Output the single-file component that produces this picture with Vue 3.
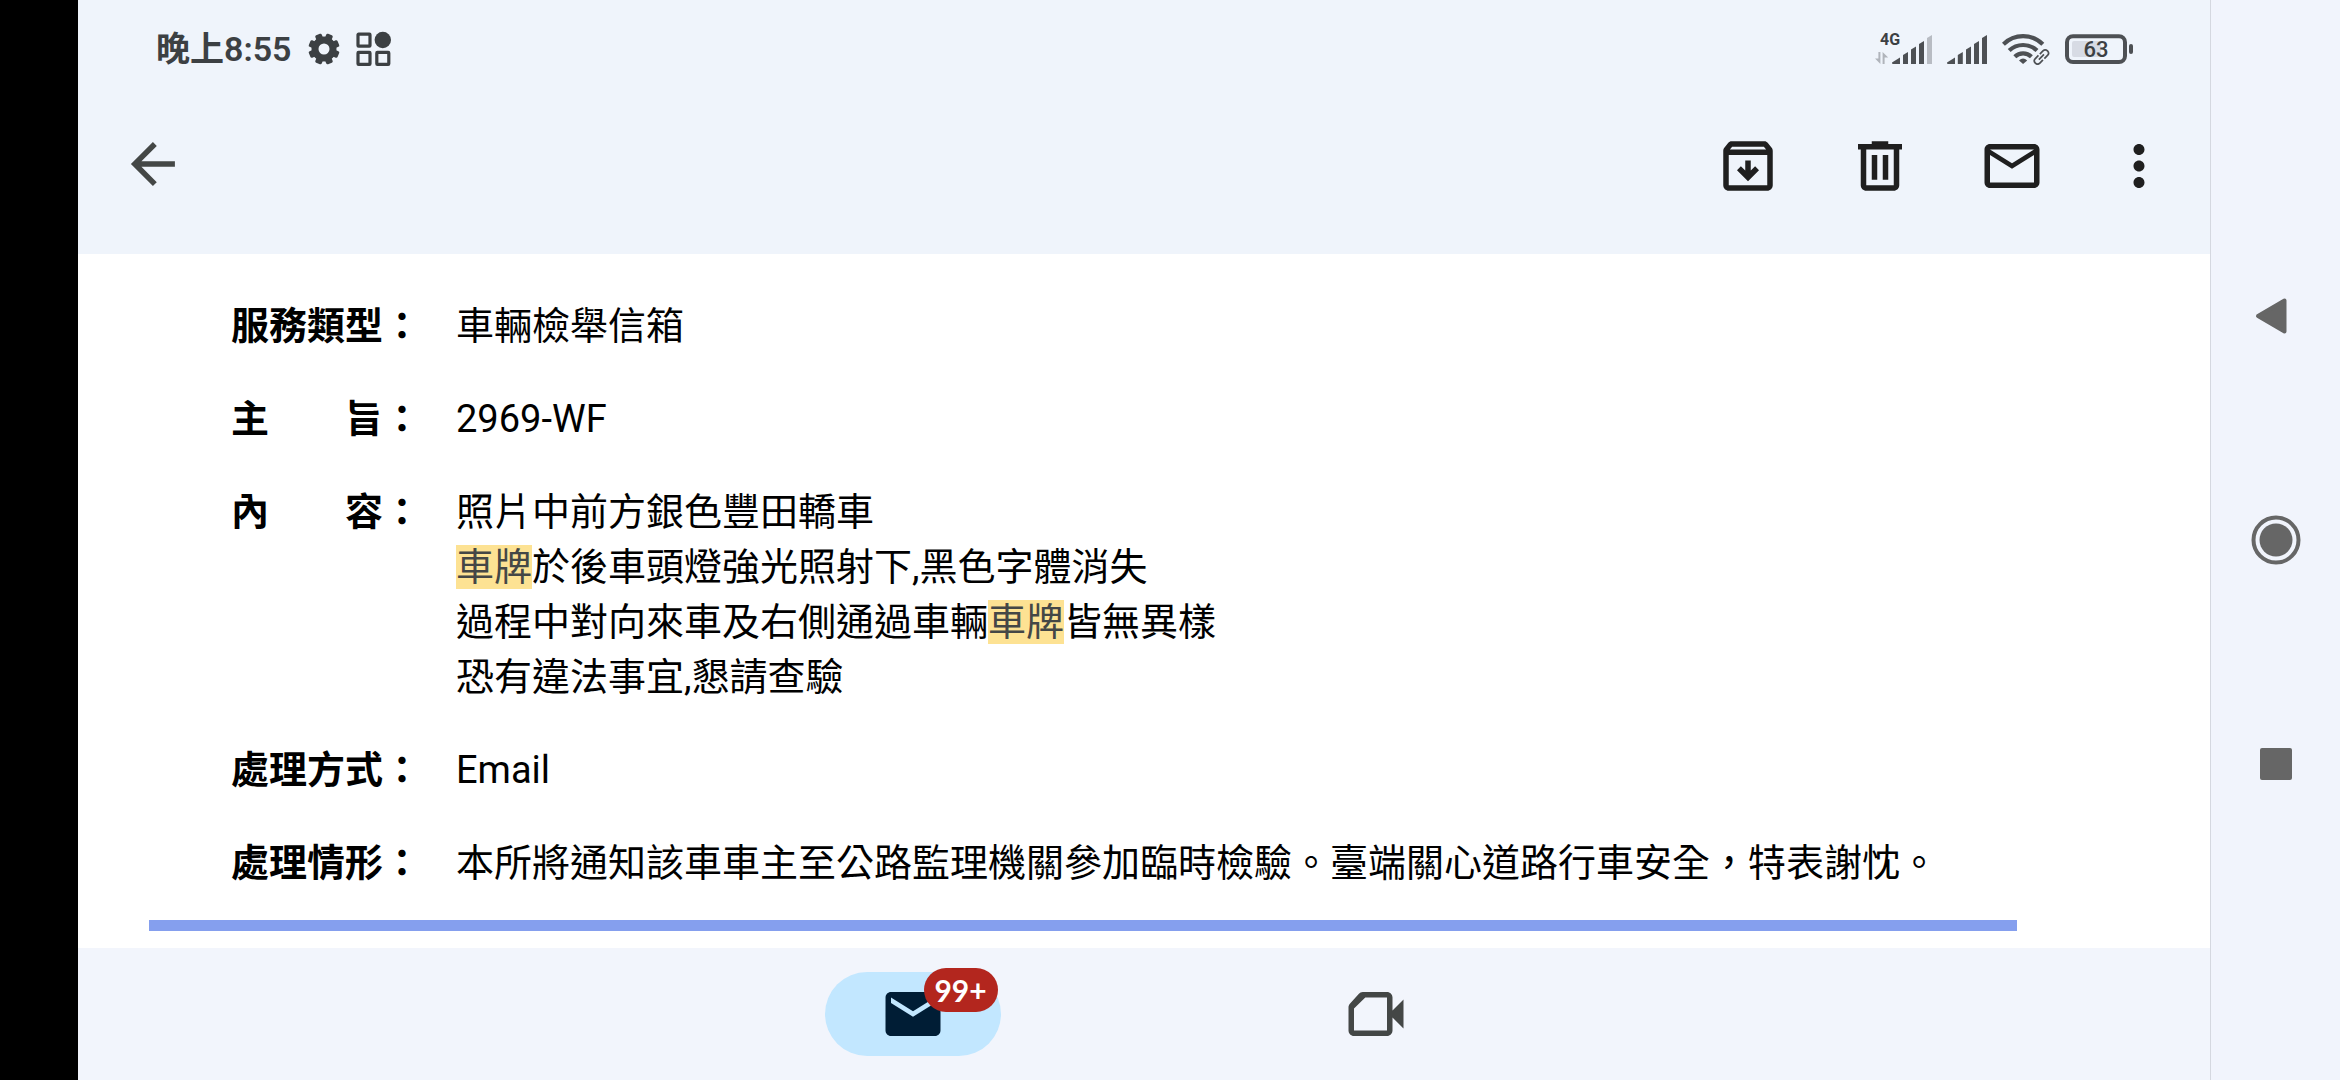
<template>
  <div class="screen">
    <div class="cutout"></div>

    <div class="app">
      <header class="header">
        <div class="status-bar">
          <div class="status-left">
            <span class="clock">晚上8:55</span>
            <svg class="gear" width="32" height="32" viewBox="-16 -16 32 32" aria-hidden="true">
              <circle r="9" fill="none" stroke="#3c4043" stroke-width="7" />
              <rect
                v-for="angle in gearTeeth"
                :key="angle"
                x="-3.5"
                y="-15.6"
                width="7"
                height="6"
                rx="1.5"
                fill="#3c4043"
                :transform="`rotate(${angle})`"
              />
            </svg>
            <svg width="36" height="36" viewBox="0 0 36 36" aria-hidden="true">
              <g fill="none" stroke="#3c4043" stroke-width="3.2">
                <rect x="2" y="3.2" width="12" height="12" rx="0.6" />
                <rect x="2" y="21.4" width="12" height="12" rx="0.6" />
                <rect x="20.8" y="21.4" width="12" height="12" rx="0.6" />
              </g>
              <circle cx="26.8" cy="9" r="8.2" fill="#3c4043" />
            </svg>
          </div>

          <div class="status-right">
            <svg width="58" height="48" viewBox="0 -8 58 48" role="img" aria-label="4G">
              <text class="network" x="5" y="12">4G</text>
              <g fill="#b0b4bb">
                <path d="M3.4 19h2v12L0 25.6h3.4z" />
                <path d="M7.6 31V19l5.6 5.4H9.6V31z" />
              </g>
              <g fill="#4d5054">
                <path d="M17 29.4l8-4.8V31h-7.6z" />
                <path d="M28 22l5-3v12h-5z" />
                <path d="M36 16.4l5-3V31h-5z" />
                <path d="M44 11l5-3v23h-5z" />
              </g>
              <path d="M52 5l5-3v29h-5z" fill="#b8bcc3" />
            </svg>
            <svg class="signal" width="41" height="32" viewBox="0 0 41 32" aria-hidden="true">
              <g fill="#4d5054">
                <path d="M0 29.4l8-4.8V31H.4z" />
                <path d="M10.8 22l5-3v12h-5z" />
                <path d="M19 16.4l5-3V31h-5z" />
                <path d="M27 11l5-3v23h-5z" />
                <path d="M35 5l5-3v29h-5z" />
              </g>
            </svg>
            <svg class="wifi" width="48" height="32" viewBox="0 0 48 32" aria-hidden="true">
              <g fill="none" stroke="#4d5054" stroke-width="4.2">
                <path d="M1.4 11.2a28 28 0 0 1 39.4 0" />
                <path d="M7.2 17.6a20 20 0 0 1 27.8 0" />
                <path d="M12.8 23.8a12 12 0 0 1 16.6 0" />
              </g>
              <path d="M17 27.4q4-3.6 8.200 0L21.100 31z" fill="#4d5054" />
              <g transform="translate(39.4 24) rotate(-45)" fill="none">
                <path d="M-2-3.4h-3.6a3.4 3.4 0 0 0 0 6.8H-2M2-3.4h3.6a3.4 3.4 0 0 1 0 6.8H2M-3.6 0h7.2" stroke="#eff4fb" stroke-width="4.6" />
                <path d="M-1-3.2h-4.4a3.2 3.2 0 0 0 0 6.4H-1M1-3.2h4.4a3.2 3.2 0 0 1 0 6.4H1M-3.6 0h7.2" stroke="#4d5054" stroke-width="1.7" />
              </g>
            </svg>
            <svg class="battery" width="70" height="32" viewBox="0 0 70 32" role="img" aria-label="63">
              <rect x="3" y="3.2" width="58" height="25.8" rx="6" fill="none" stroke="#4d5054" stroke-width="4" />
              <rect x="8" y="8" width="29" height="16" rx="2" fill="#d7dbe4" />
              <rect x="65" y="11" width="4" height="10" rx="2" fill="#4d5054" />
              <text class="level" x="32" y="24" text-anchor="middle">63</text>
            </svg>
          </div>
        </div>

        <div class="toolbar">
          <button class="icon-btn back" type="button" aria-label="返回">
            <svg width="66" height="66" viewBox="0.4 0.7 24 24">
              <path fill="#444746" d="M20 11H7.83l5.59-5.59L12 4l-8 8 8 8 1.41-1.41L7.83 13H20v-2z" />
            </svg>
          </button>
          <div class="actions">
            <button
              v-for="action in actions"
              :key="action.name"
              class="icon-btn"
              :class="action.name"
              type="button"
              :aria-label="action.label"
            >
              <svg width="66" height="66" viewBox="0 0 24 24">
                <path fill="#1f1f1f" fill-rule="evenodd" :d="action.path" />
              </svg>
            </button>
          </div>
        </div>
      </header>

      <main class="content">
        <div class="message">
          <table class="details">
            <tbody>
              <tr v-for="row in rows" :key="row.label">
                <th scope="row">{{ row.label }}</th>
                <td>
                  <div v-for="(line, i) in row.lines" :key="i">
                    <template v-for="(part, j) in splitKeyword(line)" :key="j">
                      <mark v-if="part === keyword">{{ part }}</mark>
                      <template v-else>{{ part }}</template>
                    </template>
                  </div>
                </td>
              </tr>
            </tbody>
          </table>
        </div>
      </main>

      <nav class="tabs">
        <button class="tab active" type="button" aria-label="郵件">
          <svg width="66" height="66" viewBox="0 0 24 24">
            <path fill="#001d35" d="M20 4H4c-1.1 0-1.99.9-1.99 2L2 18c0 1.1.9 2 2 2h16c1.1 0 2-.9 2-2V6c0-1.1-.9-2-2-2zm0 4l-8 5-8-5V6l8 5 8-5v2z" />
          </svg>
          <span class="badge">99+</span>
        </button>
        <button class="tab" type="button" aria-label="會議">
          <svg width="66" height="66" viewBox="0 0 24 24">
            <path fill="#444746" fill-rule="evenodd" d="M7.2 4H16c1.1 0 2 .9 2 2v4.7l4-4v10.6l-4-4V18c0 1.1-.9 2-2 2H4c-1.1 0-2-.9-2-2V9.6c0-.5.2-.9.5-1.3l3.2-3.6c.4-.4.9-.7 1.5-.7zM8.1 6L4 10v8h12V6z" />
          </svg>
        </button>
      </nav>
    </div>

    <aside class="system-nav">
      <button type="button" aria-label="上一頁">
        <svg width="56" height="56" viewBox="0 0 56 56">
          <path d="M10 28L36.5 12.5V43.5z" fill="#666" stroke="#666" stroke-width="4" stroke-linejoin="round" />
        </svg>
      </button>
      <button type="button" aria-label="主畫面">
        <svg width="56" height="56" viewBox="0 0 56 56">
          <circle cx="28" cy="28" r="22.5" fill="none" stroke="#666" stroke-width="4" />
          <circle cx="28" cy="28" r="16.5" fill="#666" />
        </svg>
      </button>
      <button type="button" aria-label="最近使用">
        <svg width="56" height="56" viewBox="0 0 56 56">
          <rect x="12" y="12" width="32" height="32" rx="2" fill="#666" />
        </svg>
      </button>
    </aside>
  </div>
</template>

<script setup>
const keyword = "車牌";

const gearTeeth = [22.5, 67.5, 112.5, 157.5, 202.5, 247.5, 292.5, 337.5];

const actions = [
  {
    name: "archive",
    label: "封存",
    path: "M20.54 5.23l-1.39-1.68C18.88 3.21 18.47 3 18 3H6c-.47 0-.88.21-1.16.55L3.46 5.23C3.17 5.57 3 6.02 3 6.5V19c0 1.1.9 2 2 2h14c1.1 0 2-.9 2-2V6.5c0-.48-.17-.93-.46-1.27zM6.24 5h11.52l.83 1H5.42l.82-1zM5 19V8h14v11H5zm11-5.5l-4 4-4-4 1.41-1.41L11 13.67V10h2v3.67l1.59-1.58L16 13.5z",
  },
  {
    name: "delete",
    label: "刪除",
    path: "M15 4V3H9v1H4v2h1v13c0 1.1.9 2 2 2h10c1.1 0 2-.9 2-2V6h1V4h-5zm2 15H7V6h10v13zM9 8h2v9H9zM13 8h2v9h-2z",
  },
  {
    name: "unread",
    label: "標示為未讀",
    path: "M22 6c0-1.1-.9-2-2-2H4c-1.1 0-2 .9-2 2v12c0 1.1.9 2 2 2h16c1.1 0 2-.9 2-2V6zm-2 0l-8 5-8-5h16zm0 12H4V8l8 5 8-5v10z",
  },
  {
    name: "more",
    label: "更多選項",
    path: "M12 8c1.1 0 2-.9 2-2s-.9-2-2-2-2 .9-2 2 .9 2 2 2zm0 2c-1.1 0-2 .9-2 2s.9 2 2 2 2-.9 2-2-.9-2-2-2zm0 6c-1.1 0-2 .9-2 2s.9 2 2 2 2-.9 2-2-.9-2-2-2z",
  },
];

const rows = [
  { label: "服務類型：", lines: ["車輛檢舉信箱"] },
  { label: "主　　旨：", lines: ["2969-WF"] },
  {
    label: "內　　容：",
    lines: [
      "照片中前方銀色豐田轎車",
      "車牌於後車頭燈強光照射下,黑色字體消失",
      "過程中對向來車及右側通過車輛車牌皆無異樣",
      "恐有違法事宜,懇請查驗",
    ],
  },
  { label: "處理方式：", lines: ["Email"] },
  {
    label: "處理情形：",
    lines: ["本所將通知該車車主至公路監理機關參加臨時檢驗。臺端關心道路行車安全，特表謝忱。"],
  },
];

// Cut a line around the search keyword so it can be highlighted
const splitKeyword = (line) => line.split(new RegExp(`(${keyword})`)).filter(Boolean);
</script>

<style>
body {
  margin: 0;
  background: #f1f4fc;
}
</style>

<style scoped>
.screen {
  display: grid;
  grid-template-columns: 78px 1fr 130px;
  min-height: 100vh;
  font-family: Roboto, "Noto Sans CJK TC", sans-serif;
}

.cutout {
  background: #000;
}

.app {
  display: flex;
  flex-direction: column;
  min-width: 0;
  background: #fff;
}

button {
  display: flex;
  align-items: center;
  justify-content: center;
  padding: 0;
  border: none;
  background: none;
  cursor: pointer;
}

svg {
  display: block;
  flex: none;
}

.header {
  padding-bottom: 20px;
  background: #eff4fb;
}

.status-bar {
  display: flex;
  align-items: center;
  justify-content: space-between;
  height: 98px;
  padding: 0 76px 0 78px;
}

.status-left,
.status-right {
  display: flex;
  align-items: center;
}

.clock {
  font-size: 34px;
  font-weight: 600;
  line-height: 40px;
  color: #3c4043;
}

.status-left {
  gap: 16px;
}

.status-right {
  gap: 14px;
}

.network {
  font-size: 16px;
  font-weight: 700;
  fill: #3c4043;
}

.level {
  font-size: 22px;
  font-weight: 500;
  fill: #3c4043;
}

.toolbar {
  display: flex;
  align-items: center;
  justify-content: space-between;
  height: 136px;
  padding: 0 10px;
}

.actions {
  display: flex;
}

.icon-btn {
  width: 132px;
  height: 132px;
}

.icon-btn.more {
  width: 122px;
}

.content {
  flex: 1;
  padding: 26px 193px 17px 71px;
}

.message {
  padding: 0 0 10px 82px;
  border-bottom: 11px solid #859fee;
}

.details {
  border-collapse: collapse;
  font-size: 38px;
  line-height: 55px;
  color: #000;
}

.details th,
.details td {
  padding: 19px 0;
  text-align: left;
  vertical-align: top;
}

.details th {
  padding-right: 35px;
  font-weight: 700;
  white-space: nowrap;
}

.details mark {
  background: #fde293;
  color: #444746;
}

.tabs {
  display: flex;
  align-items: center;
  justify-content: center;
  gap: 287px;
  height: 132px;
  background: #f2f5fc;
}

.tab {
  position: relative;
  width: 176px;
  height: 84px;
  border-radius: 42px;
}

.tab.active {
  background: #c2e7ff;
}

.badge {
  position: absolute;
  top: -4px;
  right: 3px;
  width: 74px;
  height: 44px;
  border-radius: 22px;
  background: #b3261e;
  color: #fff;
  font-family: Lato, Roboto, sans-serif;
  font-size: 30px;
  font-weight: 700;
  line-height: 44px;
  text-align: center;
}

.system-nav {
  display: flex;
  flex-direction: column;
  justify-content: center;
  border-left: 1px solid #d5d8e0;
  background: #f1f4fc;
}

.system-nav button {
  height: 224px;
}
</style>
